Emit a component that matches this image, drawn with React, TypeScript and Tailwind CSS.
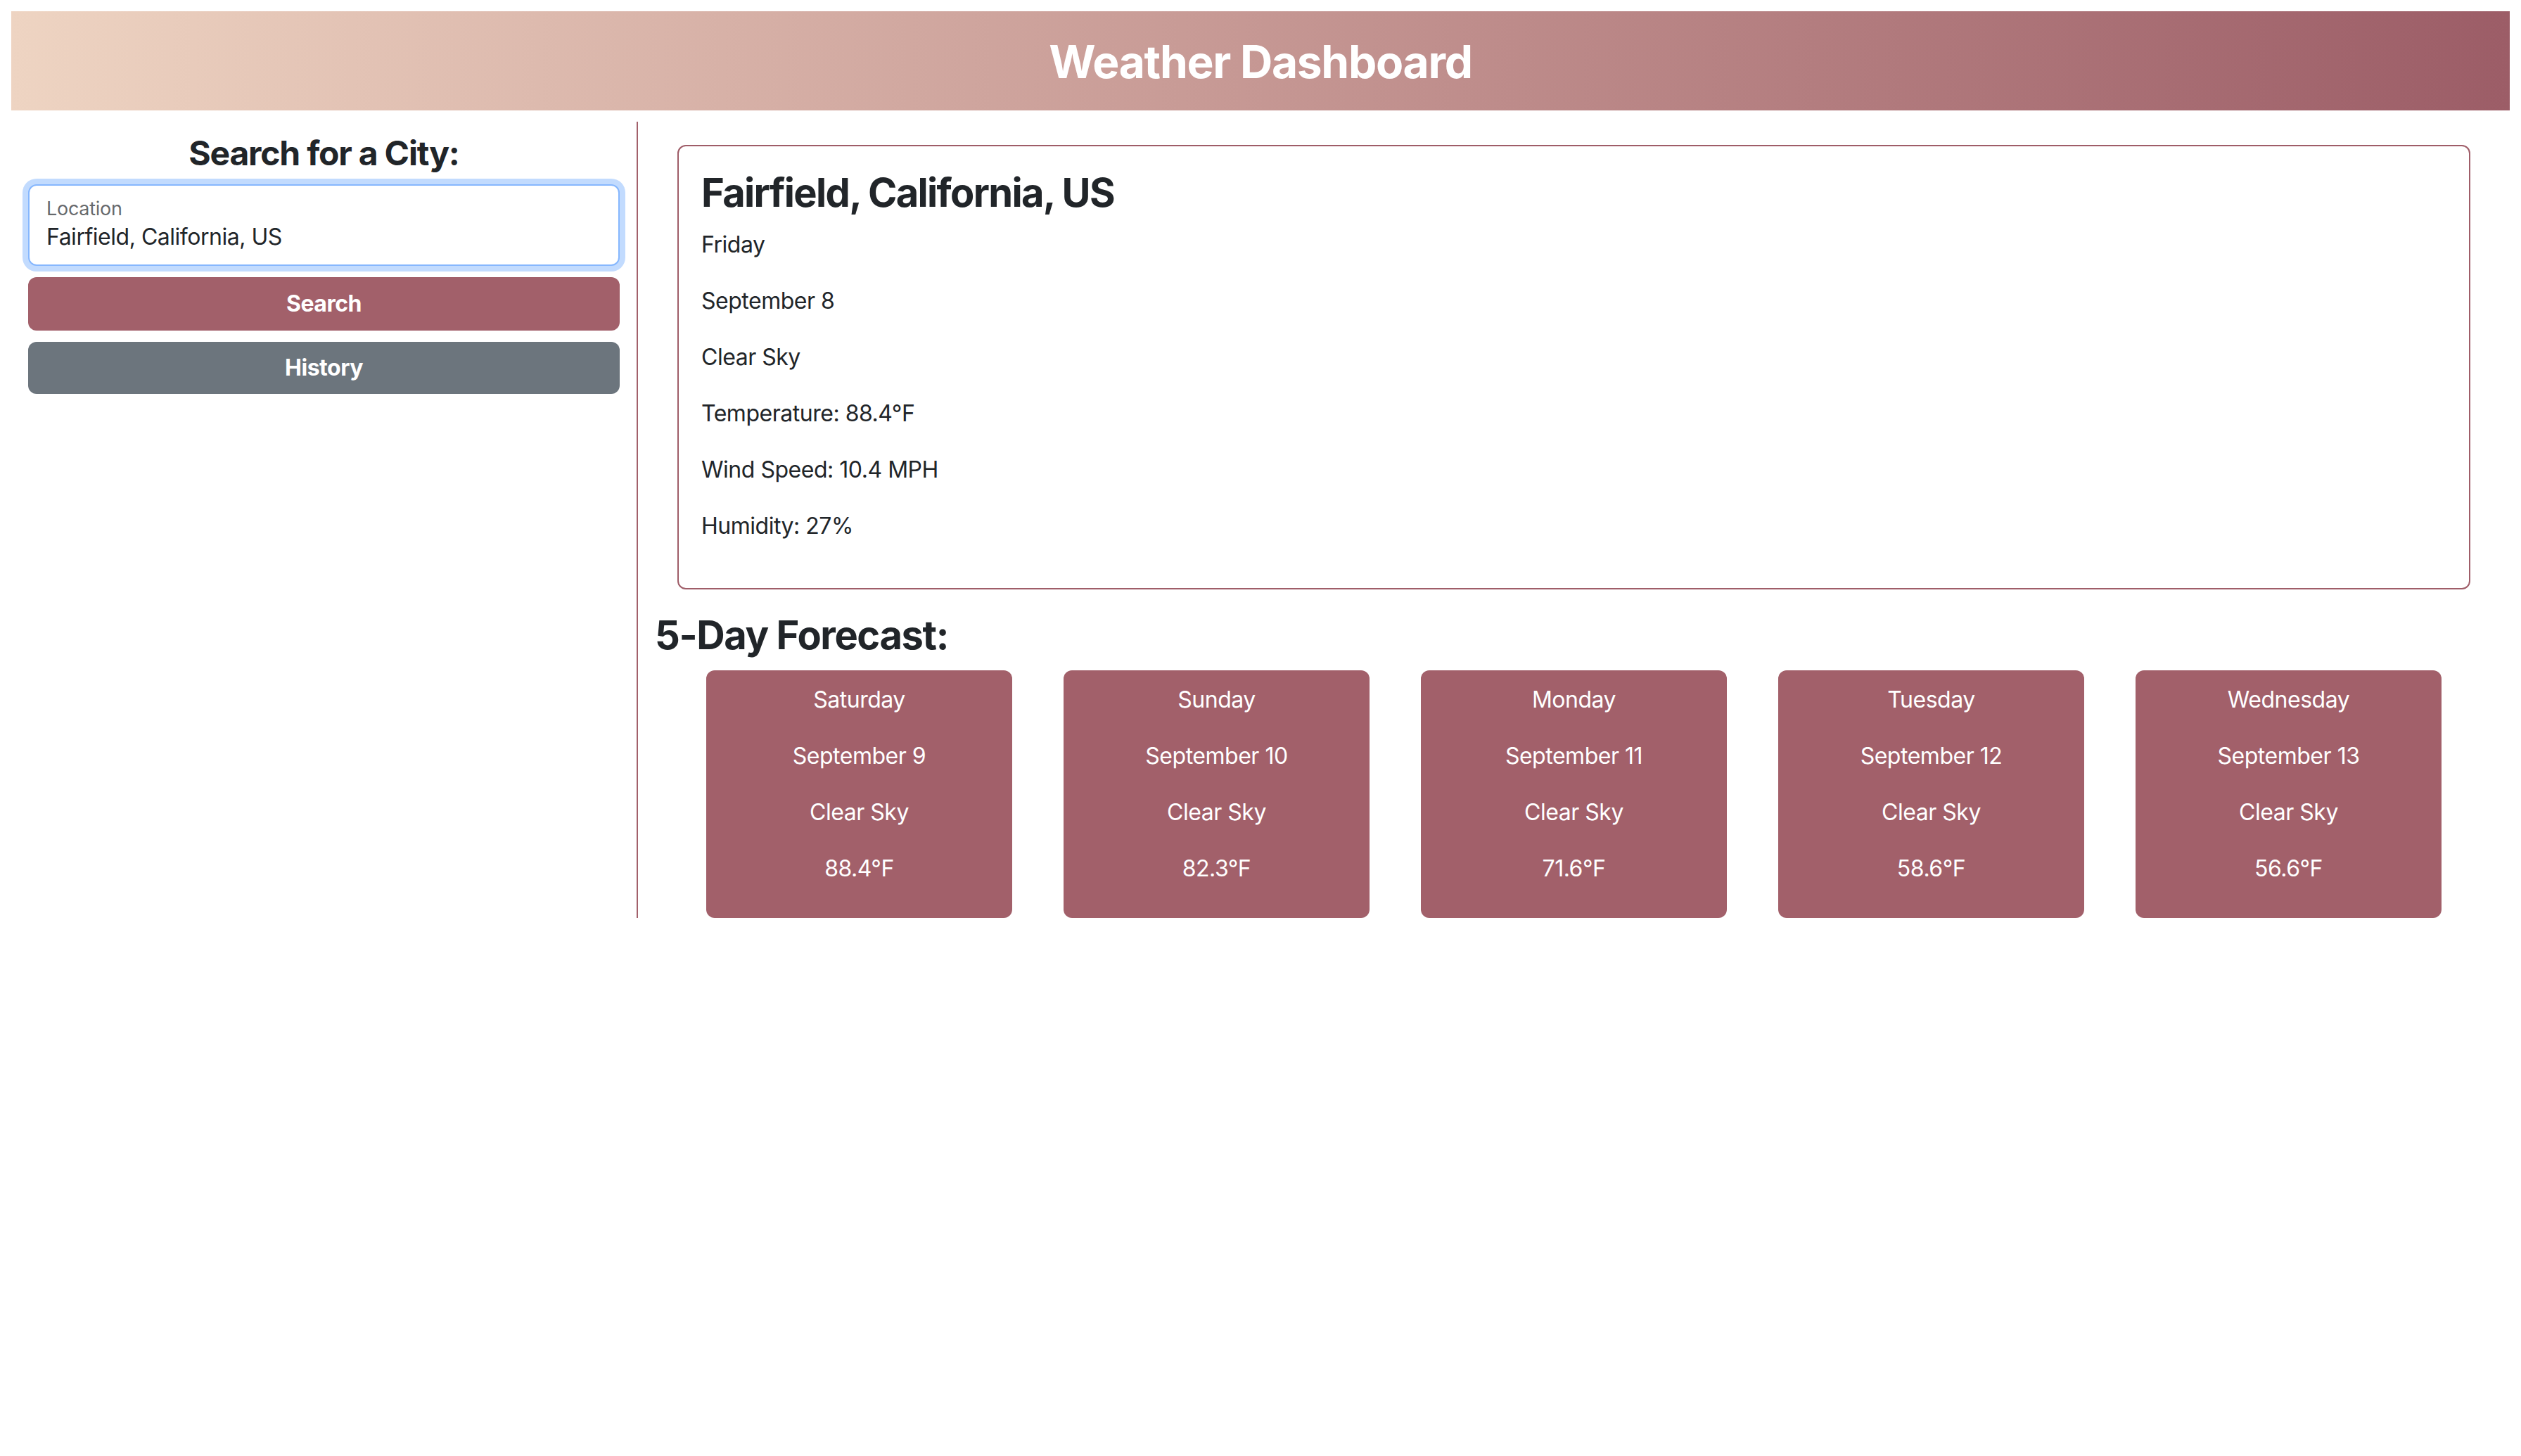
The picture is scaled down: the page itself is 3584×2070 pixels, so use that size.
const forecast = [
  { day: "Saturday", date: "September 9", desc: "Clear Sky", temp: "88.4°F" },
  { day: "Sunday", date: "September 10", desc: "Clear Sky", temp: "82.3°F" },
  { day: "Monday", date: "September 11", desc: "Clear Sky", temp: "71.6°F" },
  { day: "Tuesday", date: "September 12", desc: "Clear Sky", temp: "58.6°F" },
  { day: "Wednesday", date: "September 13", desc: "Clear Sky", temp: "56.6°F" },
];

const current = [
  "Friday",
  "September 8",
  "Clear Sky",
  "Temperature: 88.4°F",
  "Wind Speed: 10.4 MPH",
  "Humidity: 27%",
];

export default function App() {
  return (
    <div
      className="min-h-screen bg-white px-4 pt-4 text-[#212529]"
      style={{ fontFamily: "Inter, 'Noto Sans', sans-serif" }}
    >
      <header className="bg-gradient-to-r from-[#eed4c2] to-[#9c5d67] pb-[30px] pt-[34px] text-center">
        <h1 className="text-[64px] font-bold leading-[1.2] tracking-[-0.02em] text-white">
          Weather Dashboard
        </h1>
      </header>

      <div className="mt-4 flex">
        <aside className="w-[891px] shrink-0 border-r-2 border-[#a2606a] px-6 pt-4">
          <h4 className="mb-4 text-center text-[48px] font-bold leading-[1.2] tracking-[-0.025em]">
            Search for a City:
          </h4>
          <div className="flex h-[116px] flex-col justify-center rounded-[12px] border-2 border-[#86b7fe] bg-white px-6 pt-[2px] shadow-[0_0_0_8px_rgba(13,110,253,0.25)]">
            <label className="text-[27px] leading-[32px] tracking-[-0.01em] text-[rgba(33,37,41,0.7)]">
              Location
            </label>
            <div className="text-[32px] leading-[48px] tracking-[-0.015em]">
              Fairfield, California, US
            </div>
          </div>
          <button className="mt-4 h-[76px] w-full rounded-[12px] bg-[#a2606a] text-[32px] font-bold tracking-[-0.015em] text-white">
            Search
          </button>
          <button className="mt-4 h-[74px] w-full rounded-[12px] bg-[#6c757d] text-[32px] font-bold tracking-[-0.015em] text-white">
            History
          </button>
        </aside>

        <main className="flex-1 px-6 pt-[1px]">
          <section className="m-8 rounded-[12px] border-2 border-[#9f5d68] px-8 pb-8 pt-[33px]">
            <h3 className="mb-4 text-[56px] font-bold leading-[1.2] tracking-[-0.03em]">
              Fairfield, California, US
            </h3>
            {current.map((line) => (
              <p key={line} className="mb-8 text-[32px] leading-[48px] tracking-[-0.015em]">
                {line}
              </p>
            ))}
          </section>

          <h3 className="mb-4 mt-[2px] text-[56px] font-bold leading-[1.2] tracking-[-0.025em]">
            5-Day Forecast:
          </h3>
          <div className="flex justify-evenly">
            {forecast.map((f) => (
              <div
                key={f.day}
                className="w-[435px] rounded-[12px] bg-[#a2606a] px-4 pb-[14px] pt-[18px] text-center text-[32px] leading-[48px] tracking-[-0.015em] text-white"
              >
                <p className="mb-8">{f.day}</p>
                <p className="mb-8">{f.date}</p>
                <p className="mb-8">{f.desc}</p>
                <p className="mb-8">{f.temp}</p>
              </div>
            ))}
          </div>
        </main>
      </div>
    </div>
  );
}
